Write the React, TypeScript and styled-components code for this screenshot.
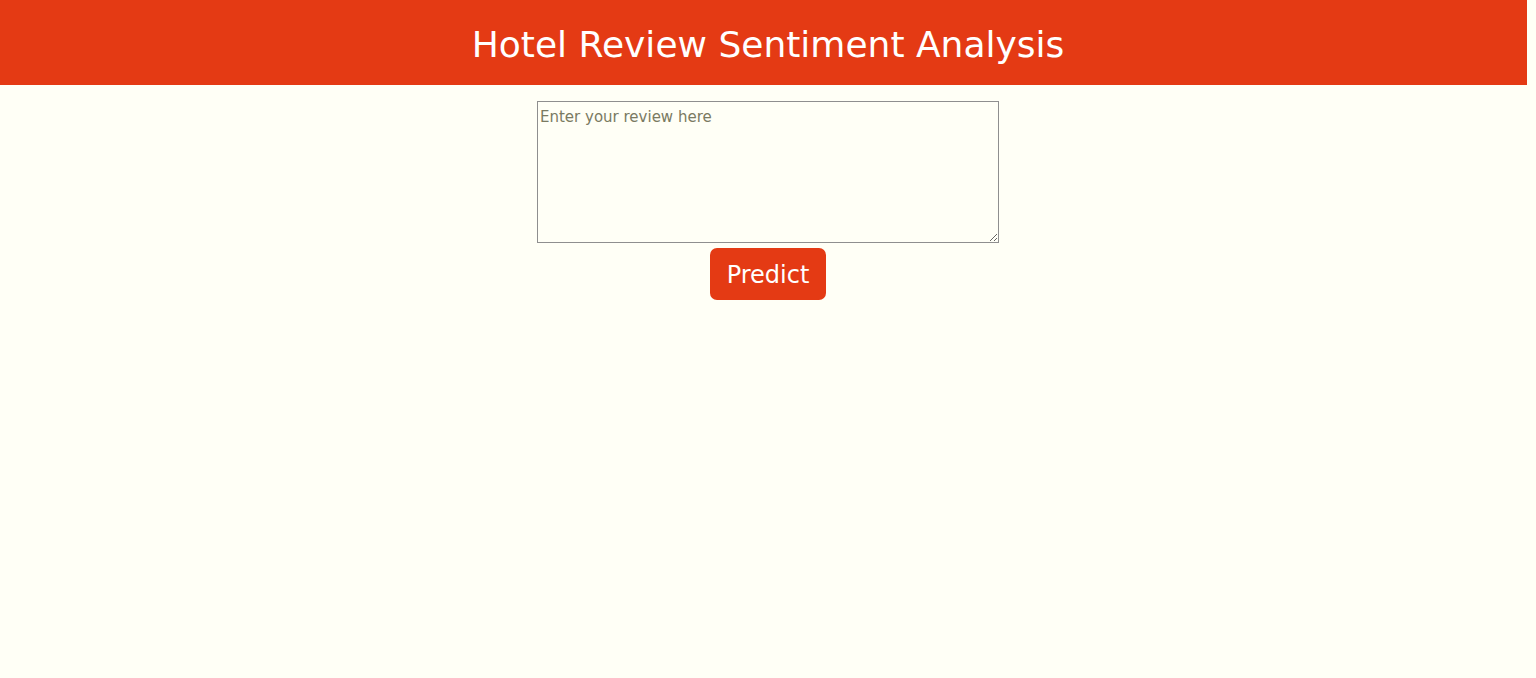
import styled, { createGlobalStyle } from 'styled-components';

const GlobalStyle = createGlobalStyle`
  html, body {
    margin: 0;
    padding: 0;
    background: #fffff6;
    font-family: "DejaVu Sans", Verdana, sans-serif;
  }
`;

const Page = styled.div`
  width: 100%;
  min-height: 678px;
  display: flex;
  flex-direction: column;
  align-items: center;
`;

const Header = styled.header`
  box-sizing: border-box;
  align-self: flex-start;
  width: calc(100% - 9px);
  height: 85px;
  padding-left: 9px;
  background-color: #e43a14;
  display: flex;
  align-items: center;
  justify-content: center;
`;

const Title = styled.h1`
  margin: 0;
  padding-top: 3px;
  font-size: 36px;
  font-weight: normal;
  color: #ffffff;
  font-family: "DejaVu Sans", Verdana, sans-serif;
`;

const Form = styled.form`
  display: flex;
  flex-direction: column;
  align-items: center;
  gap: 5px;
  margin-top: 16px;
`;

const ReviewBox = styled.textarea`
  box-sizing: border-box;
  width: 462px;
  height: 142px;
  padding: 6px 2px 4px;
  border: 1px solid #8f8f8f;
  background: #fffff6;
  font-family: "DejaVu Sans", Verdana, sans-serif;
  font-size: 15px;
  color: #333;
  resize: both;

  &::placeholder {
    color: #7a7a62;
  }
`;

const PredictButton = styled.button`
  width: 116px;
  height: 52px;
  padding: 2px 0 0;
  border: none;
  border-radius: 7px;
  background-color: #e43a14;
  color: #ffffff;
  font-family: "DejaVu Sans", Verdana, sans-serif;
  font-size: 24px;
  cursor: pointer;
`;

export default function App() {
  return (
    <>
      <GlobalStyle />
      <Page>
        <Header>
          <Title>Hotel Review Sentiment Analysis</Title>
        </Header>
        <Form onSubmit={e => e.preventDefault()}>
          <ReviewBox placeholder="Enter your review here" />
          <PredictButton type="submit">Predict</PredictButton>
        </Form>
      </Page>
    </>
  );
}
